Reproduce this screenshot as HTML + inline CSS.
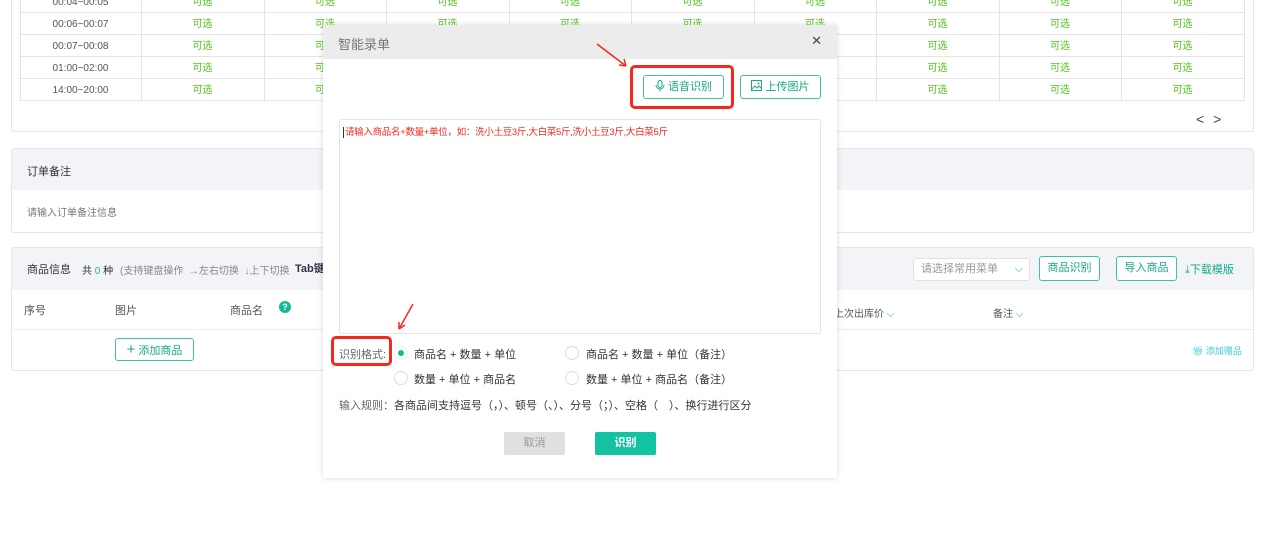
<!DOCTYPE html>
<html><head><meta charset="utf-8"><style>
*{margin:0;padding:0;box-sizing:border-box}
body{width:1268px;height:537px;overflow:hidden;background:#fff;font-family:"Liberation Sans","Noto Sans CJK SC",sans-serif;font-size:11px;color:#333;position:relative}
.a{position:absolute}
.card{position:absolute;border:1px solid #e6e6e6;border-radius:3px;background:#fff}
.c{position:absolute;text-align:center;font-size:10px;line-height:22px}
.g{color:#52c41a}
.hl{position:absolute;height:1px;background:#e4e4e4}
.vl{position:absolute;width:1px;background:#e4e4e4}
.btn{position:absolute;border:1px solid #3cc3a3;border-radius:3px;color:#17a98a;text-align:center;font-size:11px;background:#fff}
.radio{position:absolute;width:14px;height:14px;border:1px solid #ddd;border-radius:50%;background:#fff}
.red{position:absolute;border:3px solid #f5281e;border-radius:5px}
</style></head><body>
<div class="card" style="left:11px;top:-5px;width:1243px;height:137px"></div>
<div class="a" style="left:20px;top:-5px;width:1225px;height:106px;border-left:1px solid #e4e4e4;border-right:1px solid #e4e4e4;border-bottom:1px solid #e4e4e4"></div>
<div class="hl" style="left:20px;top:12px;width:1225px"></div>
<div class="hl" style="left:20px;top:34px;width:1225px"></div>
<div class="hl" style="left:20px;top:56px;width:1225px"></div>
<div class="hl" style="left:20px;top:78px;width:1225px"></div>
<div id="tb"></div>
<div class="a" style="left:1196px;top:111px;font-size:14px;color:#444;letter-spacing:9px">&lt;&gt;</div>

<div class="card" style="left:11px;top:148px;width:1243px;height:85px;overflow:hidden">
<div style="height:41px;background:#f3f4f7;padding:14px 0 0 15px;font-size:11px;color:#333">订单备注</div>
<div style="padding:14px 0 0 15px;color:#777;font-size:10px">请输入订单备注信息</div>
</div>

<div class="card" style="left:11px;top:247px;width:1243px;height:124px;overflow:hidden">
<div style="height:42px;background:#f3f4f7"></div>
<div class="hl" style="left:0;top:81px;width:1243px;background:#eee"></div>
</div>
<div class="a" style="left:27px;top:261px;font-size:11px">商品信息</div>
<div class="a" style="left:82px;top:262px;font-size:10px">共 <span style="color:#17b897">0</span> 种</div>
<div class="a" style="left:120px;top:262px;font-size:10px;color:#888">(支持键盘操作 &nbsp;→左右切换 &nbsp;↓上下切换</div>
<div class="a" style="left:295px;top:260px;font-size:11px;color:#334;font-weight:bold">Tab键</div>
<div class="a" style="left:24px;top:302px;font-size:11px;color:#555">序号</div>
<div class="a" style="left:115px;top:302px;font-size:11px;color:#555">图片</div>
<div class="a" style="left:230px;top:302px;font-size:11px;color:#555">商品名</div>
<div class="a" style="left:279px;top:301px;width:12px;height:12px;border-radius:50%;background:#17b897;color:#fff;font-size:9px;text-align:center;line-height:12px;font-weight:bold">?</div>
<div class="btn" style="left:115px;top:338px;width:79px;height:23px;line-height:21px;font-size:11px"><span style="font-size:15px">+</span> 添加商品</div>
<div class="a" style="left:913px;top:258px;width:117px;height:23px;border:1px solid #e2e2e2;border-radius:3px;color:#999;font-size:11px;line-height:21px;padding-left:7px;background:#fff">请选择常用菜单<span style="position:absolute;right:6px;color:#17b897">⌵</span></div>
<div class="btn" style="left:1039px;top:256px;width:61px;height:25px;line-height:23px">商品识别</div>
<div class="btn" style="left:1116px;top:256px;width:61px;height:25px;line-height:23px">导入商品</div>
<div class="a" style="left:1185px;top:261px;color:#17a98a;font-size:11px">⤓下载模版</div>
<div class="a" style="left:834px;top:305px;color:#555;font-size:10px">上次出库价 <span style="color:#17b897">⌵</span></div>
<div class="a" style="left:993px;top:305px;color:#555;font-size:10px">备注 <span style="color:#17b897">⌵</span></div>
<div class="a" style="left:1192px;top:344px;color:#3cc8d8;font-size:9px">🎁︎ 添加赠品</div>

<div class="a" style="left:323px;top:25px;width:514px;height:453px;background:#fff;box-shadow:0 0 6px rgba(0,0,0,.15);border-radius:2px;overflow:hidden">
<div style="height:34px;background:#ececec;padding:9px 0 0 15px;font-size:13px;color:#777">智能录单<span style="position:absolute;right:15px;top:8px;font-size:13px;color:#444">✕</span></div>
</div>
<div class="btn" style="left:643px;top:75px;width:81px;height:24px;line-height:22px"><svg width="10" height="12" viewBox="0 0 10 12" style="vertical-align:-2px"><rect x="3" y="0.5" width="4" height="7" rx="2" fill="none" stroke="#17a98a"/><path d="M1 5a4 4 0 0 0 8 0M5 9v2.5" fill="none" stroke="#17a98a"/></svg> 语音识别</div>
<div class="btn" style="left:740px;top:75px;width:81px;height:24px;line-height:22px"><svg width="11" height="11" viewBox="0 0 11 11" style="vertical-align:-1px"><rect x="0.5" y="0.5" width="10" height="10" fill="none" stroke="#17a98a"/><path d="M1 9l3-3 2 2 2-2 2 2" fill="none" stroke="#17a98a"/><circle cx="7.5" cy="3.5" r="1" fill="#17a98a"/></svg> 上传图片</div>
<div class="red" style="left:630px;top:65px;width:104px;height:44px"></div>
<svg class="a" style="left:595px;top:42px" width="36" height="28"><path d="M2 2L31 24" stroke="#f5281e" stroke-width="1.5"/><path d="M31 24l-7-1M31 24l-2-7" stroke="#f5281e" stroke-width="1.5"/></svg>
<div class="a" style="left:339px;top:119px;width:482px;height:215px;border:1px solid #e6e6e6;border-radius:2px;padding:4px 3px;color:#f5281e;font-size:9.5px;letter-spacing:-0.3px"><span style="border-left:1px solid #333;margin-right:1px"></span>请输入商品名+数量+单位，如：洗小土豆3斤,大白菜5斤,洗小土豆3斤,大白菜5斤</div>
<svg class="a" style="left:395px;top:302px" width="20" height="30"><path d="M18 2L4 27" stroke="#f5281e" stroke-width="1.5"/><path d="M4 27l0-7M4 27l6-4" stroke="#f5281e" stroke-width="1.5"/></svg>
<div class="red" style="left:331px;top:336px;width:61px;height:30px"></div>
<div class="a" style="left:339px;top:346px;font-size:11px;color:#666">识别格式:</div>
<div class="radio" style="left:394px;top:346px;border-color:#eee"><div style="position:absolute;left:3px;top:3px;width:6px;height:6px;border-radius:50%;background:#17b897"></div></div>
<div class="a" style="left:414px;top:346px;font-size:11px">商品名 + 数量 + 单位</div>
<div class="radio" style="left:565px;top:346px"></div>
<div class="a" style="left:586px;top:346px;font-size:11px">商品名 + 数量 + 单位（备注）</div>
<div class="radio" style="left:394px;top:371px"></div>
<div class="a" style="left:414px;top:371px;font-size:11px">数量 + 单位 + 商品名</div>
<div class="radio" style="left:565px;top:371px"></div>
<div class="a" style="left:586px;top:371px;font-size:11px">数量 + 单位 + 商品名（备注）</div>
<div class="a" style="left:339px;top:397px;font-size:11px;white-space:nowrap"><span style="color:#666">输入规则：</span>各商品间支持逗号（，）、顿号（、）、分号（；）、空格（　）、换行进行区分</div>
<div class="a" style="left:504px;top:432px;width:61px;height:23px;background:#e0e0e0;border-radius:2px;color:#999;text-align:center;line-height:23px;font-size:11px">取消</div>
<div class="a" style="left:595px;top:432px;width:61px;height:23px;background:#13c2a0;border-radius:2px;color:#fff;text-align:center;line-height:23px;font-size:11px;font-weight:bold">识别</div>
<script>
var xs=[20,141,264,386,509,631,754,876,999,1121,1244];
var t=["00:04~00:05","00:06~00:07","00:07~00:08","01:00~02:00","14:00~20:00"];
var h="";
for(var i=1;i<xs.length-1;i++)h+='<div class="vl" style="left:'+xs[i]+'px;top:-5px;height:106px"></div>';
for(var r=0;r<5;r++){var y=-8+r*22;
h+='<div class="c" style="left:20px;top:'+y+'px;width:121px;color:#555">'+t[r]+'</div>';
for(var i=1;i<xs.length-1;i++)h+='<div class="c g" style="left:'+xs[i]+'px;top:'+y+'px;width:'+(xs[i+1]-xs[i])+'px">可选</div>';}
document.getElementById("tb").innerHTML=h;
</script>
</body></html>
